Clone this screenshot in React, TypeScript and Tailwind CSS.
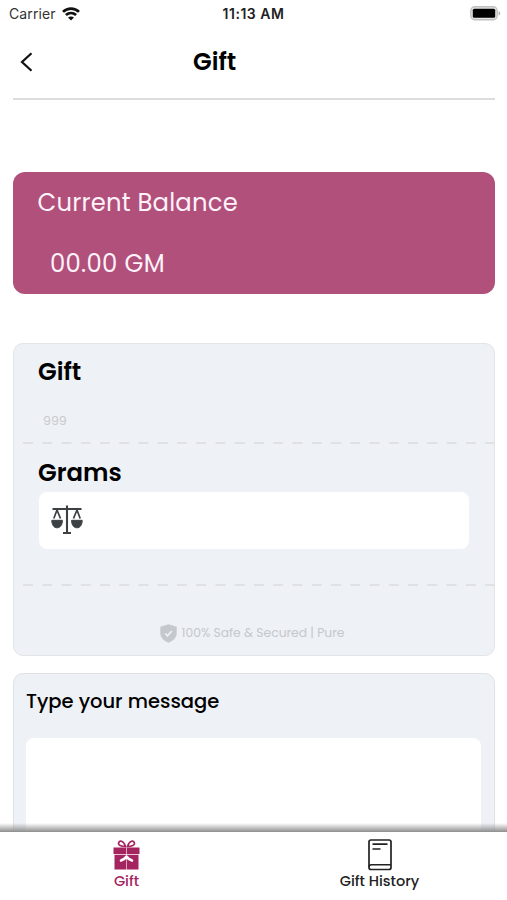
import React from "react";

function WifiIcon() {
  return (
    <svg width="18" height="14" viewBox="0 0 18 14" fill="none" stroke="#111" strokeWidth="2.7">
      <path d="M1 4.9C5.6.4 12.4.4 17 4.9" />
      <path d="M3.900 8.100c3-2.800 7.200-2.800 10.200 0" />
      <path d="M9 13.600 6 10.600c1.700-1.600 4.300-1.600 6 0z" fill="#111" stroke="none" />
    </svg>
  );
}

function BatteryIcon() {
  return (
    <svg width="31" height="15" viewBox="0 0 31 15">
      <rect x=".8" y=".8" width="26.400" height="13" rx="4" fill="#e4e4e4" stroke="#c0c0c0" strokeWidth="1.400" />
      <rect x="2.800" y="2.800" width="22.400" height="9" rx="1.500" fill="#000" />
      <path d="M28.600 5c2.200.8 2.200 3.800 0 4.600z" fill="#b0b0b0" />
    </svg>
  );
}

function ScaleIcon() {
  return (
    <svg width="32" height="30" viewBox="0 0 32 30" fill="none" stroke="#3d4043">
      <path d="M16 .5v28M1.500 4h29" strokeWidth="2.100" />
      <path d="M12 28h8" strokeWidth="2" />
      <path d="M2.800 13.500 6 5l3.500 8.500M22.500 13.500 26 5l3.200 8.500" strokeWidth="1.700" />
      <path d="M.8 15.300h10.600c0 4.500-2 7.500-5.300 7.500s-5.300-3-5.300-7.500zM20.600 15.300h10.600c0 4.500-2 7.500-5.300 7.500s-5.300-3-5.300-7.500z" fill="#3d4043" strokeWidth="1" />
    </svg>
  );
}

function ShieldIcon() {
  return (
    <svg width="17" height="19" viewBox="0 0 17 19">
      <path d="M8.500.3 16.700 2.800v6.200c0 5-4.200 8.200-8.200 9.700C4.500 17.200.3 14 .3 9V2.800z" fill="#c5c8cc" />
      <path d="m5.200 9.500 2.300 2.200 4.300-4.700" fill="none" stroke="#eef1f6" strokeWidth="1.700" />
    </svg>
  );
}

function GiftIcon() {
  return (
    <svg width="27" height="30" viewBox="0 0 27 30">
      <g fill="none" stroke="#a3245f" strokeWidth="1.700">
        <path d="M12.500 6.500C8 6.500 5 5 5.600 2.900 6.600.1 10.400.1 12.500 6.500z" />
        <path d="M14.500 6.500c4.500 0 7.500-1.500 6.900-3.600C20.400.1 16.600.1 14.500 6.500z" />
      </g>
      <path d="M.5 7.500H13.200V14H.5zM13.800 7.500h12.700V14H13.800zM1.500 14.700H13.200V29.500H1.500zM13.800 14.700h11.700v14.800H13.800z" fill="#a3245f" />
      <path d="M8 20.500c2.800-1 4.500-2.400 5.500-4 1 1.600 2.700 3 5.500 4" fill="none" stroke="#fff" strokeWidth="2.600" strokeLinecap="round" strokeLinejoin="round" />
    </svg>
  );
}

function BookIcon() {
  return (
    <svg width="24" height="32" viewBox="0 0 24 32" fill="none" stroke="#222" strokeWidth="1.700">
      <rect x="1" y="1" width="22" height="29.500" rx="2" />
      <path d="M1 28c0-1.500 1-2.300 2.500-2.300H23" strokeWidth="1.400" />
      <path d="M4.500 5.200H19.500M4.500 10H12.500" strokeWidth="1.700" />
    </svg>
  );
}

function DashedLine() {
  return (
    <svg className="ml-[9px] block h-[2px] w-[472px]" viewBox="0 0 472 2">
      <path d="M0 1h472" stroke="#dfe1e5" strokeWidth="2" strokeDasharray="10 9.250" />
    </svg>
  );
}

export default function App() {
  return (
    <div className="flex h-[900px] w-[507px] flex-col overflow-hidden bg-white font-['Poppins','Inter',sans-serif] text-black">
      <header className="shrink-0 px-[13px]">
        <div className="-mx-[4px] grid h-[27px] grid-cols-3 items-center font-['Inter',sans-serif] text-[14px] leading-[26px]">
          <div className="flex items-center gap-[6px] text-[#333]">
            <span className="tracking-[0.1px]">Carrier</span>
            <WifiIcon />
          </div>
          <span className="whitespace-nowrap text-center text-[14px] font-semibold tracking-[0.5px] text-[#222]">11:13 AM</span>
          <div className="-mr-[3px] flex justify-end"><BatteryIcon /></div>
        </div>
        <div className="-mr-px flex h-[73px] items-start border-b-2 border-[#dcdcdc] pt-[17px]">
          <svg className="ml-[7px] mt-[8px]" width="13" height="20" viewBox="0 0 13 20" fill="none" stroke="#111" strokeWidth="2.200">
            <path d="M11.500 1.200 2 10l9.500 8.800" />
          </svg>
          <h1 className="ml-[160px] text-[24.300px] font-semibold leading-[36px]">Gift</h1>
        </div>
      </header>

      <main className="min-h-0 flex-1 overflow-hidden px-[13px] pt-[72px]">
        <section className="h-[122px] w-[482px] rounded-[12px] bg-[#b0507b] text-[24.300px] text-[#fff3fa]">
          <p className="pl-[24.500px] pt-[13px] leading-[36px] tracking-[0.200px]">Current Balance</p>
          <p className="pl-[37px] pt-[25px] leading-[36px] tracking-[0.300px]">00.00 GM</p>
        </section>

        <section className="mt-[49px] h-[313px] w-[482px] rounded-[10px] border-[1.500px] border-[#e3e4e7] bg-[#eef1f6]">
          <h2 className="pl-[24px] pt-[10px] text-[24.300px] font-semibold leading-[36px]">Gift</h2>
          <p className="mt-[21px] pl-[29px] text-[12.500px] leading-[20px] text-[#c9cbce]">999</p>
          <div className="mt-[11px]"><DashedLine /></div>
          <h2 className="mt-[11px] pl-[24px] text-[24.300px] font-semibold leading-[36px]">Grams</h2>
          <div className="ml-[25px] mt-[1px] flex h-[57px] w-[430px] items-center rounded-[8px] bg-white pb-[2px] pl-[12px]">
            <ScaleIcon />
          </div>
          <div className="mt-[35px]"><DashedLine /></div>
          <div className="mt-[37px] flex items-center gap-[5px] pl-[145.500px] text-[12.300px] leading-[20px] text-[#c5c8cc]">
            <ShieldIcon />
            <span>100% Safe &amp; Secured | Pure</span>
          </div>
        </section>

        <section className="mt-[17px] h-[240px] w-[482px] rounded-[10px] border border-[#dfe1e4] bg-[#eef1f6] px-[12px]">
          <p className="pt-[13px] text-[19.500px] font-medium leading-[30px]">Type your message</p>
          <div className="mt-[21px] h-[140px] w-[455px] rounded-[8px] bg-white" />
        </section>
      </main>

      <nav className="relative flex h-[69px] shrink-0 bg-white text-[14.500px] font-medium leading-[20px]">
        <div className="absolute inset-x-0 -top-[8px] h-[9px] bg-linear-to-b from-transparent to-[#8e8e8e]" />
        <div className="flex flex-1 flex-col items-center pt-[9px] text-[#a3245f]">
          <GiftIcon />
          <span className="mt-[1px]">Gift</span>
        </div>
        <div className="flex flex-1 flex-col items-center pr-[1px] pt-[8px] text-[#222]">
          <BookIcon />
          <span>Gift History</span>
        </div>
      </nav>
    </div>
  );
}
